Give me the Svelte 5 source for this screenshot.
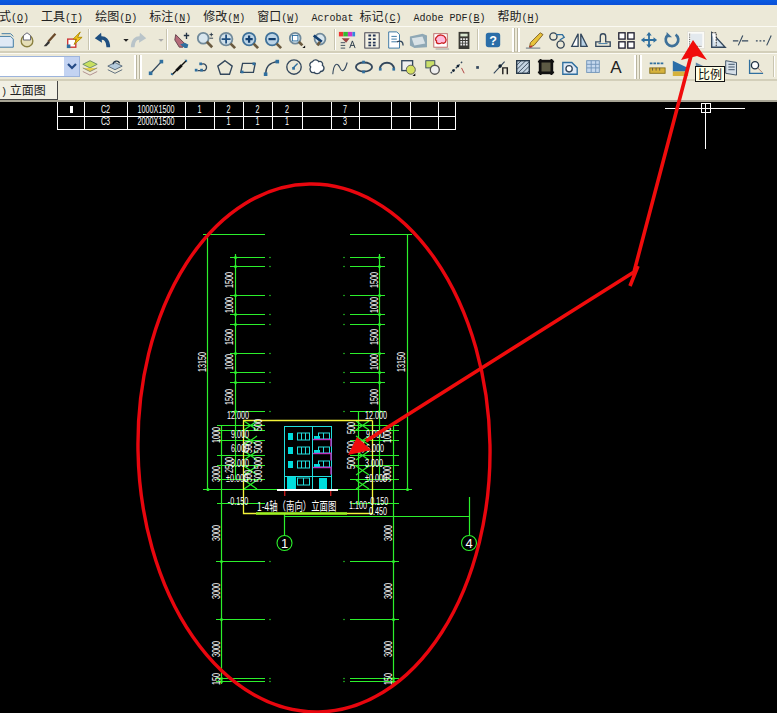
<script>
	const menu = [
		{ zh: '式', key: 'O' },
		{ zh: '工具', key: 'T' },
		{ zh: '绘图', key: 'D' },
		{ zh: '标注', key: 'N' },
		{ zh: '修改', key: 'M' },
		{ zh: '窗口', key: 'W' },
		{ en: 'Acrobat ', zh: '标记', key: 'C' },
		{ en: 'Adobe PDF', zh: '', key: 'B' },
		{ zh: '帮助', key: 'H' }
	];

	const B = '#2f6f9f';
	const D = '#33475c';
	const icons = {
		page: `<path d="M1 6h13l3 3v9H1z" fill="#dfe9f5" stroke="${B}"/><path d="M4 3h10l3 3" fill="none" stroke="${B}"/>`,
		stamp: `<circle cx="10" cy="11" r="6.5" fill="#e6dfb8" stroke="#8a8040" stroke-width="1.5"/><path d="M6 5l4-3 4 3v5H6z" fill="#fff" stroke="#556"/>`,
		brush: `<path d="M16 3L8 12" stroke="#6b4a2a" stroke-width="2.5"/><path d="M8 11l2 2-4 4H3z" fill="#333"/>`,
		bolt: `<rect x="3" y="9" width="9" height="9" fill="#fff" stroke="#c33" stroke-width="1.5"/><path d="M17 1L9 9h4l-3 6 9-8h-5z" fill="#f4c418" stroke="#a80"/><rect x="2" y="15" width="4" height="4" fill="${B}"/>`,
		undo: `<path d="M17 18C17 10 13 7 8 8" fill="none" stroke="#1f4f80" stroke-width="4"/><path d="M9 2L2 8l8 5z" fill="#1f4f80"/>`,
		redo: `<path d="M3 18C3 10 7 7 12 8" fill="none" stroke="#b9c4c9" stroke-width="4"/><path d="M11 2l7 6-8 5z" fill="#b9c4c9"/>`,
		drop: `<path d="M7 9h6l-3 3z" fill="#222"/>`,
		dropOff: `<path d="M7 9h6l-3 3z" fill="#aaa"/>`,
		hand: `<path d="M3 4l10 10-2 4H7L2 10z" fill="#b56a78" stroke="#60404a"/><path d="M8 15l5 4h3l1-4-4-2z" fill="${B}"/><path d="M15 2v7M12 5h6" stroke="#234" stroke-width="1.5"/>`,
		zoomA: `<circle cx="8" cy="8" r="6" fill="#d8e6ee" stroke="#718a9a" stroke-width="2"/><path d="M12 12l6 6" stroke="#6b5b40" stroke-width="3"/><path d="M17 2v4M15 4h4M15 8h4" stroke="#234"/>`,
		zoomB: `<circle cx="9" cy="9" r="7" fill="#cfe0ea" stroke="#718a9a" stroke-width="2"/><path d="M14 14l5 5" stroke="#6b5b40" stroke-width="3"/><path d="M9 4v10M4 9h10" stroke="#1f4f80" stroke-width="2"/>`,
		zoomIn: `<circle cx="9" cy="9" r="7" fill="#bcd4e6" stroke="#3f7199" stroke-width="2"/><path d="M14 14l5 5" stroke="#6b5b40" stroke-width="3"/><path d="M9 5v8M5 9h8" stroke="#123f70" stroke-width="2.5"/>`,
		zoomOut: `<circle cx="9" cy="9" r="7" fill="#bcd4e6" stroke="#3f7199" stroke-width="2"/><path d="M14 14l5 5" stroke="#6b5b40" stroke-width="3"/><path d="M5 9h8" stroke="#123f70" stroke-width="2.5"/>`,
		zoomWin: `<circle cx="8" cy="8" r="6" fill="#d8e6ee" stroke="#718a9a" stroke-width="2"/><rect x="5" y="5" width="6" height="6" fill="#fff" stroke="${B}"/><path d="M12 12l4 4" stroke="#6b5b40" stroke-width="3"/><path d="M19 16v3h-3z" fill="#111"/>`,
		zoomPrev: `<circle cx="10" cy="9" r="6" fill="#d8e6ee" stroke="#718a9a" stroke-width="2"/><path d="M3 5l9 7" stroke="#123f70" stroke-width="3"/><path d="M7 16l3-4" stroke="#6b5b40" stroke-width="3"/>`,
		palette: `<rect x="1" y="1" width="5" height="5" fill="#e33"/><rect x="6" y="1" width="5" height="5" fill="#3b3"/><rect x="11" y="1" width="5" height="5" fill="#c3c"/><rect x="16" y="1" width="3" height="5" fill="#38d"/><path d="M4 8l9 0-4 5z" fill="#944"/><path d="M3 13h5M3 16h5M3 19h5" stroke="#345"/><path d="M13 19l3-8 3 8M14 16h4" stroke="#234" fill="none"/>`,
		grid: `<rect x="2" y="2" width="16" height="17" fill="#f3f1e4" stroke="#334"/><path d="M6 5h3M11 5h3M6 9h3M11 9h3M6 13h3M11 13h3M6 16h3M11 16h3" stroke="#235" stroke-width="2"/>`,
		doc: `<path d="M3 1h9l3 3v15H3z" fill="#fff" stroke="${B}"/><path d="M6 6h6M6 9h6M6 12h6" stroke="${B}"/><path d="M12 12c5-2 7 0 7 4" fill="none" stroke="${D}" stroke-width="1.5"/>`,
		sheet: `<path d="M1 6l14-3 5 2v13l-14 1-5-3z" fill="#8fa8b5"/><path d="M3 8l12-2 3 8-12 2z" fill="#d9e2e6"/>`,
		cloudDoc: `<rect x="2" y="3" width="15" height="15" fill="#fff" stroke="#b66"/><path d="M5 7c2-4 9-3 10 1 2 3-1 7-4 5-3 2-7 1-6-2-2-1-1-3 0-4z" fill="#fbd" stroke="#c22" stroke-width="1.5"/><path d="M4 20h15" stroke="#999"/>`,
		calc: `<rect x="4" y="1" width="12" height="19" fill="#3a3a34"/><rect x="6" y="3" width="8" height="3" fill="#d9e7d0"/><path d="M6 9h2M9 9h2M12 9h2M6 12h2M9 12h2M12 12h2M6 15h2M9 15h2M12 15h2" stroke="#eee" stroke-width="2"/>`,
		help: `<rect x="2" y="2" width="16" height="16" rx="3" fill="#2b6ea8"/><text x="10" y="15" font-size="14" font-weight="700" text-anchor="middle" fill="#fff" font-family="Liberation Sans">?</text>`,
		pen: `<path d="M17 2l3 2-10 12-5 2 1-5z" fill="#e8c33a" stroke="#7a5b20"/><path d="M5 18l3-1" stroke="#b33" stroke-width="2"/><path d="M1 19h16" stroke="#567"/>`,
		copy: `<circle cx="6" cy="6" r="4" fill="none" stroke="#345" stroke-width="1.5"/><circle cx="14" cy="15" r="4" fill="none" stroke="#345" stroke-width="1.5"/><path d="M9 4h7l2 3-5 3" fill="none" stroke="${B}" stroke-width="1.5"/>`,
		mirror: `<path d="M9 3L2 17h7z" fill="#fff" stroke="${D}" stroke-width="1.5"/><path d="M12 3l7 14h-7z" fill="#b9d2e6" stroke="${D}" stroke-width="1.5"/>`,
		offset: `<path d="M2 17h16v-5h-5V6a3 3 0 0 0-6 0v6H2z" fill="none" stroke="${D}" stroke-width="1.5"/><path d="M5 14h10" stroke="${B}"/>`,
		array: `<rect x="2" y="2" width="7" height="7" fill="#fff" stroke="#223" stroke-width="1.5"/><rect x="12" y="2" width="7" height="7" fill="#fff" stroke="#223" stroke-width="1.5"/><rect x="2" y="12" width="7" height="7" fill="#fff" stroke="#223" stroke-width="1.5"/><rect x="12" y="12" width="7" height="7" fill="#fff" stroke="#223" stroke-width="1.5"/>`,
		move: `<path d="M10 1l3 4h-2v4h4V7l4 3-4 3v-2h-4v4h2l-3 4-3-4h2v-4H5v2l-4-3 4-3v2h4V5H7z" fill="#2f6f9f"/>`,
		rotate: `<path d="M6 4a7 7 0 1 0 8 0" fill="none" stroke="#3f7199" stroke-width="3"/><path d="M4 1v6h6z" fill="#3f7199"/>`,
		scale: `<rect x="0.5" y="0.5" width="19" height="19" fill="#fbfbf8" stroke="#e4e2d8"/><rect x="4" y="3" width="13" height="13" fill="#e3e9ee"/><path d="M3 3v14h14" fill="none" stroke="#333" stroke-dasharray="1 1"/>`,
		stretch: `<path d="M3 2v16h15z" fill="#d5e3ee" stroke="${D}" stroke-width="1.5"/><path d="M3 2h5v16" fill="#fff" stroke="#111" stroke-dasharray="2 1"/>`,
		trim: `<path d="M1 11h6M11 11h7" stroke="${D}" stroke-width="1.2"/><path d="M7 16l5-11" stroke="${D}" stroke-width="1.2"/>`,
		extend: `<path d="M1 11h2M5 11h2M9 11h2" stroke="${D}" stroke-width="1.2"/><path d="M13 16l5-11" stroke="${D}" stroke-width="1.2"/>`,
		layers: `<path d="M2 7l8-4 8 4-8 4z" fill="#c8e060" stroke="#686"/><path d="M2 11l8 4 8-4" fill="#e8d050" stroke="#886"/><path d="M2 15l8 4 8-4" fill="none" stroke="#a88"/>`,
		layers2: `<path d="M2 9l8-4 8 4-8 4z" fill="#b5cbdc" stroke="#567"/><path d="M2 13l8 4 8-4" fill="none" stroke="#567"/><path d="M8 7c0-4 6-5 7-1" fill="none" stroke="#234" stroke-width="1.5"/>`,
		line: `<path d="M4 17L16 4" stroke="${D}" stroke-width="1.5"/><rect x="2" y="15" width="4" height="4" fill="${B}"/><rect x="14" y="2" width="4" height="4" fill="${B}"/>`,
		xline: `<path d="M2 19L18 3" stroke="#111" stroke-width="1.5"/><path d="M7 14l6-6" stroke="#111" stroke-width="3"/><path d="M16 2l3 0 0 3zM4 19l-3 0 0-3z" fill="${B}"/>`,
		pline: `<path d="M3 13h8a4 4 0 1 0-4-7" fill="none" stroke="${D}" stroke-width="1.5" transform="translate(2 1)"/><rect x="2" y="12" width="3" height="3" fill="${B}"/><rect x="8" y="12" width="3" height="3" fill="${B}"/><rect x="7" y="5" width="3" height="3" fill="${B}"/>`,
		poly: `<path d="M10 3l8 6-3 9H5L2 9z" fill="none" stroke="${D}" stroke-width="1.5"/>`,
		rect: `<path d="M4 6h14l-2 10H2z" fill="none" stroke="${D}" stroke-width="1.5"/><rect x="2" y="14" width="3" height="3" fill="${B}"/><rect x="15" y="5" width="3" height="3" fill="${B}"/>`,
		arc: `<path d="M4 18C4 10 9 5 17 4" fill="none" stroke="${D}" stroke-width="1.5"/><rect x="2" y="16" width="4" height="4" fill="${B}"/><rect x="15" y="2" width="4" height="4" fill="${B}"/>`,
		circle: `<circle cx="10" cy="10" r="8" fill="none" stroke="${D}" stroke-width="1.5"/><path d="M9 11l5-5" stroke="${B}" stroke-width="1.5"/><rect x="8" y="10" width="3" height="3" fill="${B}"/>`,
		cloud: `<path d="M5 4c2-3 6-2 7 0 3-1 5 2 4 4 3 2 2 7-2 7-1 3-6 3-7 1-4 1-6-3-4-6-2-2-1-5 2-6z" fill="#fff" stroke="${D}" stroke-width="1.5"/>`,
		spline: `<path d="M2 18C3 6 7 4 10 11s6 1 8-6" fill="none" stroke="${D}" stroke-width="1.2"/>`,
		ellipse: `<ellipse cx="10" cy="10" rx="9" ry="5" fill="none" stroke="${D}" stroke-width="2"/><rect x="8" y="3" width="3" height="3" fill="${B}"/><rect x="8" y="14" width="3" height="3" fill="${B}"/>`,
		earc: `<path d="M2 12C4 3 16 3 18 12" fill="none" stroke="${D}" stroke-width="2"/><rect x="1" y="11" width="3" height="3" fill="${B}"/><rect x="16" y="11" width="3" height="3" fill="${B}"/>`,
		insert: `<rect x="2" y="3" width="12" height="11" fill="#eee" stroke="${D}" stroke-width="1.5"/><circle cx="12" cy="13" r="5" fill="#d5e060" stroke="#555"/><path d="M17 17v3h-3z" fill="#111"/>`,
		block: `<rect x="2" y="3" width="10" height="8" fill="#cadf6a" stroke="${D}"/><circle cx="12" cy="13" r="5" fill="#eee" stroke="#555" stroke-width="1.5"/>`,
		points: `<path d="M3 17L16 4" stroke="${D}" stroke-dasharray="2 2" stroke-width="1.5"/><circle cx="6" cy="14" r="1.5" fill="#123"/><circle cx="11" cy="9" r="1.5" fill="#123"/><path d="M15 11l3 6" stroke="#a33"/>`,
		point: `<rect x="8" y="9" width="3" height="3" fill="${D}"/>`,
		node: `<path d="M2 17L14 4" stroke="${D}" stroke-width="1.2"/><circle cx="9" cy="9" r="2" fill="#123"/><path d="M12 18v-7h5v7" fill="none" stroke="#222" stroke-width="1.6"/>`,
		hatch: `<rect x="3" y="3" width="14" height="14" fill="#c5d4e2" stroke="#234" stroke-width="1.5"/><path d="M3 8l5-5M3 13L13 3M4 17L17 4M9 17l8-8M14 17l3-3" stroke="#345"/>`,
		gradient: `<rect x="3" y="3" width="14" height="14" fill="#5c5a44" stroke="#111" stroke-width="2"/><path d="M1 4h18M1 16h18M4 1v18M16 1v18" stroke="#111" stroke-width="2"/>`,
		region: `<path d="M2 5h10l6 6v7H2z" fill="#dfe9f5" stroke="${B}" stroke-width="1.5"/><circle cx="9" cy="12" r="3.5" fill="#fff" stroke="${D}" stroke-width="1.5"/>`,
		table: `<rect x="3" y="3" width="14" height="13" fill="#c6d9ee" stroke="#6f93b8"/><path d="M3 7h14M3 11h14M8 3v13M13 3v13" stroke="#6f93b8"/>`,
		textA: `<text x="10" y="17" font-size="19" text-anchor="middle" fill="#222" font-family="Liberation Sans">A</text>`,
		dimA: `<path d="M2 6h16" stroke="${B}" stroke-width="2" stroke-dasharray="3 1"/><rect x="2" y="11" width="17" height="6" fill="#d6b23c" stroke="#86701d"/><path d="M5 11v3M9 11v3M13 11v3" stroke="#654"/>`,
		dimB: `<path d="M2 15L2 3 19 11v4z" fill="#2b6ea8"/><rect x="2" y="15" width="17" height="5" fill="#d6b23c"/>`,
		dimC: `<path d="M2 15V5l17 8v2z" fill="#5f85a5"/>`,
		list: `<path d="M3 3l12 2v14l-12-2z" fill="#d5dfe8" stroke="${D}"/><path d="M6 7h7M6 10h7M6 13h7" stroke="${D}"/>`,
		axis: `<path d="M4 2v15h15" fill="none" stroke="${B}" stroke-width="1.5"/><circle cx="10" cy="8" r="4" fill="#fff" stroke="#234" stroke-width="1.5"/><path d="M13 11l5 5" stroke="#a76"/>`
	};

	const widths = { '|': 2, '#': 8, drop: 12, dropOff: 12 };
	// turn [name, centre x] pairs into flow items with the margin each one needs
	function place(list, start = 0) {
		let end = start;
		return list.map(([name, cx]) => {
			const w = widths[name] ?? 18;
			const gap = cx - w / 2 - end;
			end = cx + w / 2;
			return { name, w, gap };
		});
	}

	const toolbarOne = place([
		['page', 7], ['stamp', 27], ['brush', 50], ['bolt', 74], ['|', 89],
		['undo', 102], ['drop', 123], ['redo', 139], ['dropOff', 158], ['|', 167],
		['hand', 182], ['zoomA', 205], ['zoomB', 227], ['zoomIn', 250], ['zoomOut', 273], ['zoomWin', 297], ['zoomPrev', 320], ['|', 335],
		['palette', 347], ['grid', 372], ['doc', 395], ['sheet', 418], ['cloudDoc', 441], ['calc', 464], ['|', 478], ['help', 493], ['#', 516],
		['pen', 534], ['copy', 557], ['mirror', 579], ['offset', 603], ['array', 626], ['move', 649], ['rotate', 672], ['scale', 696], ['stretch', 718], ['trim', 741], ['extend', 764]
	]);
	const toolbarTwo = place([
		['layers', 90], ['layers2', 115], ['#', 138],
		['line', 156], ['xline', 179], ['pline', 202], ['poly', 225], ['rect', 248], ['arc', 271], ['circle', 294], ['cloud', 317], ['spline', 340], ['ellipse', 364], ['earc', 387],
		['insert', 409], ['block', 433], ['points', 457], ['point', 478], ['node', 501], ['hatch', 523], ['gradient', 546], ['region', 570], ['table', 593], ['textA', 616], ['#', 638],
		['dimA', 657], ['dimB', 680], ['dimC', 703], ['list', 732], ['axis', 755], ['|', 774]
	], 80);

	// table drawn in the model space
	const tableCols = [57, 84, 127, 185, 214, 243, 272, 302, 331, 359, 391, 410, 438, 455];
	const tableRows = [
		{ y: 111, cells: ['', 'C2', '1000X1500', '1', '2', '2', '2', '', '7'] },
		{ y: 123, cells: ['', 'C3', '2000X1500', '', '1', '1', '1', '', '3'] }
	];

	const riseYs = [257, 266, 295, 314, 324, 353, 372, 382, 411];
	const lowerYs = [561, 619, 678, 681];
	const midYs = [425, 430, 440, 455, 465, 479, 503];
	const crossYs = [421, 436, 451, 466, 480];

	const dims = [
		[230, 280, '1500'], [230, 305, '1000'], [230, 337, '1500'], [230, 362, '1000'], [230, 397, '1500'],
		[375, 280, '1500'], [375, 305, '1000'], [375, 337, '1500'], [375, 362, '1000'], [375, 397, '1500'],
		[203, 362, '13150'], [402, 362, '13150'],
		[217, 435, '1000'], [217, 474, '3000'], [230, 465, '2500'],
		[259, 425, '500'], [259, 447, '500'], [259, 463, '500'], [259, 476, '500'], [249, 447, '500'], [249, 476, '500'],
		[352, 428, '500'], [352, 447, '500'], [352, 463, '500'], [361, 447, '500'],
		[388, 435, '1000'], [388, 474, '3000'],
		[217, 533, '3000'], [389, 533, '3000'], [217, 591, '3000'], [389, 591, '3000'],
		[217, 649, '3000'], [389, 649, '3000'], [217, 679, '150'], [389, 679, '150']
	];
	const levels = [
		[238, 416, '12.000'], [240, 435, '9.000'], [240, 449, '6.000'], [240, 464, '3.000'], [237, 479, '±0.000'], [238, 502, '-0.150'],
		[376, 416, '12.000'], [375, 435, '9.000'], [375, 449, '6.000'], [374, 464, '3.000'], [376, 479, '±0.000'], [378, 502, '-0.150'],
		[358, 506, '1:100'], [378, 512, '0.450']
	];
</script>

{#snippet bar(items)}
	{#each items as item}
		{#if item.name === '|'}
			<span class="sep" style="margin-left: {item.gap}px"></span>
		{:else if item.name === '#'}
			<span class="grip" style="margin-left: {item.gap}px"></span>
		{:else}
			<svg class="icon" style="margin-left: {item.gap}px; width: {item.w}px" viewBox="0 0 {item.w > 12 ? 20 : 13.3} 20">{@html icons[item.name]}</svg>
		{/if}
	{/each}
{/snippet}

<div class="window">
	<div class="titlebar"></div>

	<nav class="menubar">
		{#each menu as item}
			<span class="menu-item">{#if item.en}<span class="latin">{item.en}</span>{/if}{item.zh}<span class="latin">(<u>{item.key}</u>)</span></span>
		{/each}
	</nav>

	<div class="toolbar one">
		{@render bar(toolbarOne)}
	</div>

	<div class="toolbar two">
		<div class="combo"><span class="combo-btn"><svg viewBox="0 0 10 8" width="10" height="8"><path d="M1 1l4 4 4-4" fill="none" stroke="#244a86" stroke-width="2.2"/></svg></span></div>
		{@render bar(toolbarTwo)}
	</div>

	<div class="tabs">
		<span class="tab"><span class="latin">)</span> 立面图</span>
	</div>

	<div class="canvas">
		<svg class="drawing" viewBox="0 102 777 611" width="777" height="611">
			<g class="table-lines">
				{#each [116.5, 129.5] as y}
					<line x1="57" x2="455" y1={y} y2={y} />
				{/each}
				{#each tableCols as x}
					<line x1={x + 0.5} x2={x + 0.5} y1="102" y2="130" />
				{/each}
			</g>
			<g class="cad-text">
				{#each tableRows as row}
					{#each row.cells as cell, i}
						<text transform="translate({(tableCols[i] + tableCols[i + 1]) / 2} {row.y + 2}) scale(.72 1)" text-anchor="middle">{cell}</text>
					{/each}
				{/each}
			</g>
			<rect x="70" y="106" width="3" height="7" fill="#fff" />

			<!-- crosshair -->
			<g class="table-lines">
				<line x1="665" x2="745" y1="108.5" y2="108.5" />
				<line x1="705.5" x2="705.5" y1="103" y2="149" />
				<rect x="701.5" y="103.5" width="9" height="9" fill="none" />
			</g>

			<!-- extension lines -->
			<g class="green">
				<line x1="203" x2="265" y1="234.5" y2="234.5" />
				<line x1="350" x2="412" y1="234.5" y2="234.5" />
				<line x1="207.5" x2="207.5" y1="234" y2="491" />
				<line x1="407.5" x2="407.5" y1="234" y2="491" />
				<line x1="235.5" x2="235.5" y1="254" y2="480" />
				<line x1="379.5" x2="379.5" y1="254" y2="480" />
				<line x1="221.5" x2="221.5" y1="425" y2="684" />
				<line x1="393.5" x2="393.5" y1="425" y2="684" />
				<line x1="358.5" x2="358.5" y1="412" y2="505" />
				{#each riseYs as y}
					<line x1="230" x2="265" y1={y + 0.5} y2={y + 0.5} />
					<line x1="350" x2="385" y1={y + 0.5} y2={y + 0.5} />
					<circle cx="235.5" cy={y + 0.5} r="1.5" />
					<circle cx="379.5" cy={y + 0.5} r="1.5" />
					<circle cx="270" cy={y + 0.5} r="0.7" />
					<circle cx="344" cy={y + 0.5} r="0.7" />
				{/each}
				{#each lowerYs as y}
					<line x1="216" x2="265" y1={y + 0.5} y2={y + 0.5} />
					<line x1="350" x2="399" y1={y + 0.5} y2={y + 0.5} />
					<circle cx="221.5" cy={y + 0.5} r="1.5" />
					<circle cx="393.5" cy={y + 0.5} r="1.5" />
					<circle cx="270" cy={y + 0.5} r="0.7" />
					<circle cx="344" cy={y + 0.5} r="0.7" />
				{/each}
				{#each midYs as y}
					<line x1="217" x2="265" y1={y + 0.5} y2={y + 0.5} />
					<line x1="350" x2="399" y1={y + 0.5} y2={y + 0.5} />
				{/each}
				{#each crossYs as y}
					<path d="M244 {y}l13 9M257 {y}l-13 9" />
					<path d="M356 {y}l13 9M369 {y}l-13 9" />
				{/each}
				<line x1="203" x2="412" y1="489.5" y2="489.5" />
				<circle cx="208" cy="489.5" r="1.5" />
				<circle cx="407.5" cy="489.5" r="1.5" />
				<line x1="285" x2="469.5" y1="516.5" y2="516.5" />
				<line x1="469.5" x2="469.5" y1="497" y2="535" />
				<line x1="284.5" x2="284.5" y1="513" y2="536" />
				<circle class="bubble" cx="284.5" cy="543" r="7.5" />
				<circle class="bubble" cx="469" cy="543" r="7.5" />
			</g>

			<!-- title frame and building elevation -->
			<path class="yellow" d="M372.5 420.5H243.5V513.5H372.5V420.5" />
			<line class="underline" x1="256" x2="347" y1="513.5" y2="513.5" />
			<g class="cyan">
				<rect x="284.5" y="426.5" width="47" height="63.5" />
				<line x1="312.5" x2="312.5" y1="427" y2="490" />
				<line x1="285" x2="331" y1="476.5" y2="476.5" />
				{#each [433, 447, 461] as y}
					<rect x="288" y={y} width="5" height="7" fill="#00e0e0" class="solid" />
					<rect x="297.5" y={y} width="12" height="7" />
					<line x1="301.5" x2="301.5" y1={y} y2={y + 7} />
					<line x1="305.5" x2="305.5" y1={y} y2={y + 7} />
					<rect x="318.5" y={y} width="11" height="6" />
					<line x1="323.5" x2="323.5" y1={y} y2={y + 6} />
					<rect x="314" y={y + 3} width="6" height="3" class="solid" />
				{/each}
				<rect x="287" y="477" width="9" height="12" class="solid" />
				<rect x="297.5" y="478" width="12" height="7" />
				<line x1="303.5" x2="303.5" y1="478" y2="485" />
				<rect x="319" y="478" width="8" height="11" class="solid" />
			</g>
			<g class="magenta">
				{#each [439.5, 453.5, 467.5] as y}
					<line x1="313" x2="331" y1={y} y2={y} />
					<line x1="331" x2="331" y1={y - 1} y2={y + 7} />
				{/each}
			</g>
			<rect x="277" y="489" width="61" height="2" fill="#fff" />
			<rect x="284" y="491" width="1.4" height="5" fill="#c01818" />
			<rect x="330" y="491" width="1.4" height="5" fill="#c01818" />

			<g class="cad-text">
				{#each dims as [x, y, t]}
					<text transform="translate({x + 3} {y}) rotate(-90) scale(.72 1)" text-anchor="middle">{t}</text>
				{/each}
				{#each levels as [x, y, t]}
					<text transform="translate({x} {y + 3}) scale(.72 1)" text-anchor="middle">{t}</text>
				{/each}
				<text class="bubble-text" x="284.5" y="548" text-anchor="middle">1</text>
				<text class="bubble-text" x="469" y="548" text-anchor="middle">4</text>
			</g>
			<text class="plan-title" transform="translate(257 511) scale(.7 1)">1-4轴（南向）立面图</text>
		</svg>
	</div>

	<div class="tooltip">比例</div>

	<svg class="markup" viewBox="0 0 777 713" width="777" height="713">
		<ellipse class="ring" cx="314" cy="448" rx="176" ry="264" transform="rotate(-1 314 448)" />
		<path class="pen-line" d="M692 52L634 272M638 266L630 286M634 272L366 441" />
		<path class="pen-head" d="M681 60L693 40L707 60L697 56z" />
		<path class="pen-head" d="M348 455L357 437L371 450z" />
	</svg>
</div>

<style>
	:global(body) {
		margin: 0;
		background: #000;
	}

	.window {
		position: relative;
		width: 777px;
		height: 713px;
		overflow: hidden;
		display: flex;
		flex-direction: column;
		background: #ece9d8;
		font-family: 'Noto Sans CJK SC', sans-serif;
		color: #222;
	}

	.titlebar {
		height: 5px;
		background: linear-gradient(#0a5be0, #0b50d8);
		flex: none;
	}

	.menubar {
		height: 21px;
		flex: none;
		display: flex;
		align-items: center;
		margin-left: -7px;
		font-size: 12px;
		white-space: nowrap;
		box-sizing: border-box;
	}

	.menu-item {
		padding: 0 6px;
	}

	.latin {
		font-family: 'Liberation Mono', monospace;
		font-size: 10px;
	}

	.toolbar {
		flex: none;
		display: flex;
		align-items: center;
		box-sizing: border-box;
		border-bottom: 2px solid #d3cfba;
		border-top: 1px solid #fbfaf3;
		white-space: nowrap;
	}

	.one {
		height: 27px;
		padding-top: 1px;
	}

	.two {
		height: 28px;
	}

	.icon {
		height: 18px;
		flex: none;
		overflow: visible;
	}

	.sep {
		width: 2px;
		height: 21px;
		box-sizing: border-box;
		border-left: 1px solid #c9c5b0;
		border-right: 1px solid #fff;
		flex: none;
	}

	.grip {
		width: 8px;
		height: 24px;
		box-sizing: border-box;
		flex: none;
		border-left: 2px solid #fff;
		border-right: 2px solid #fff;
		background: linear-gradient(90deg, #b8b49f 1px, transparent 1px, transparent 3px, #b8b49f 3px);
	}

	.combo {
		width: 80px;
		height: 21px;
		box-sizing: border-box;
		flex: none;
		background: #fff;
		border: 1px solid #9db4dc;
		border-left: none;
		display: flex;
		justify-content: flex-end;
	}

	.combo-btn {
		width: 15px;
		background: #c3d3f2;
		display: flex;
		align-items: center;
		justify-content: center;
	}

	.tabs {
		height: 21px;
		flex: none;
		display: flex;
		box-sizing: border-box;
		border-bottom: 2px solid #a8a595;
	}

	.tab {
		width: 58px;
		box-sizing: border-box;
		border-right: 1px solid #444;
		border-bottom: 1px solid #444;
		background: #f1efe3;
		font-size: 12px;
		line-height: 18px;
		padding-left: 1px;
		white-space: nowrap;
	}

	.canvas {
		flex: 1;
		background: #000;
		min-height: 0;
	}

	.drawing {
		display: block;
	}

	.table-lines line,
	.table-lines rect {
		stroke: #fff;
		stroke-width: 1;
	}

	.cad-text text {
		font-family: 'Liberation Sans', sans-serif;
		font-size: 10px;
		fill: #fff;
	}

	.cad-text .bubble-text {
		font-size: 13px;
	}

	.plan-title {
		font-family: 'Noto Sans CJK SC', sans-serif;
		font-size: 12px;
		fill: #fff;
	}

	.green line,
	.green path {
		stroke: #2cf02c;
		stroke-width: 1.2;
		fill: none;
	}

	.green circle {
		fill: #2cf02c;
	}

	.green .bubble {
		fill: none;
		stroke: #2cf02c;
		stroke-width: 1.1;
	}

	.yellow {
		fill: none;
		stroke: #f4f43a;
		stroke-width: 1.3;
	}

	.underline {
		stroke: #9af020;
		stroke-width: 2.5;
	}

	.cyan rect,
	.cyan line {
		stroke: #22dede;
		stroke-width: 1;
	}

	.cyan rect {
		fill: none;
	}

	.cyan .solid {
		fill: #00dcdc;
		stroke: none;
	}

	.magenta line {
		stroke: #c030c0;
		stroke-width: 1.4;
	}

	.tooltip {
		position: absolute;
		left: 695px;
		top: 66px;
		width: 30px;
		height: 16px;
		box-sizing: border-box;
		background: #ffffe6;
		border: 1px solid #111;
		font-size: 12px;
		line-height: 14px;
		text-align: center;
		color: #111;
		z-index: 2;
	}

	.markup {
		position: absolute;
		left: 0;
		top: 0;
		pointer-events: none;
	}

	.ring {
		fill: none;
		stroke: #e8060e;
		stroke-width: 3.4;
	}

	.pen-line {
		fill: none;
		stroke: #f00c0c;
		stroke-width: 3.6;
	}

	.pen-head {
		fill: #f00c0c;
	}
</style>
